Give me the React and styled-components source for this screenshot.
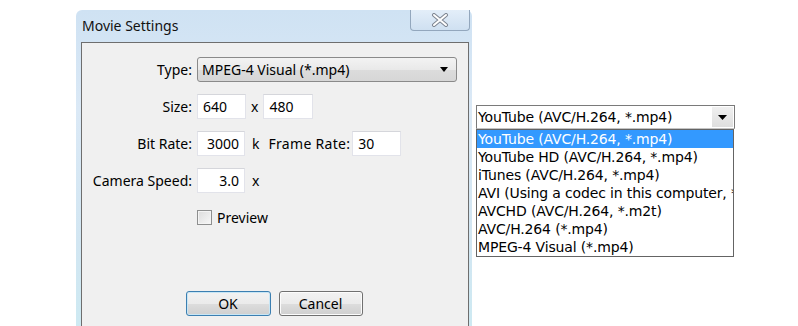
import React, { useState } from "react";
import styled, { createGlobalStyle } from "styled-components";

const GlobalStyle = createGlobalStyle`
  html, body {
    margin: 0;
    padding: 0;
    background: #ffffff;
    overflow: hidden;
  }
`;

const formats = [
  "YouTube (AVC/H.264, *.mp4)",
  "YouTube HD (AVC/H.264, *.mp4)",
  "iTunes (AVC/H.264, *.mp4)",
  "AVI (Using a codec in this computer, *.avi)",
  "AVCHD (AVC/H.264, *.m2t)",
  "AVC/H.264 (*.mp4)",
  "MPEG-4 Visual (*.mp4)",
];

export default function App() {
  const [selected] = useState(0);
  const [preview, setPreview] = useState(false);

  return (
    <>
      <GlobalStyle />
      <Page>
        <Window>
          <TitleBar>
            <Title>Movie Settings</Title>
            <CloseButton>
              <svg width="22" height="14" viewBox="0 0 22 14">
                <path d="M5 2 L17 12 M17 2 L5 12" stroke="#7d8591" strokeWidth="4" strokeLinecap="round" fill="none" />
                <path d="M5 2 L17 12 M17 2 L5 12" stroke="#ffffff" strokeWidth="2" strokeLinecap="round" fill="none" />
              </svg>
            </CloseButton>
          </TitleBar>
          <Client>
            <Form>
              <Label>Type:</Label>
              <Select>
                <span>MPEG-4 Visual (*.mp4)</span>
                <Arrow />
              </Select>

              <Label>Size:</Label>
              <Line>
                <Field $w={49}>640</Field>
                <Unit $l={5} $r={5}>x</Unit>
                <Field $w={50}>480</Field>
              </Line>

              <Label>Bit Rate:</Label>
              <Line>
                <Field $w={48} $right>3000</Field>
                <Unit $l={7} $r={0}>k</Unit>
                <Unit $l={9} $r={2} $wide>Frame Rate:</Unit>
                <Field $w={49}>30</Field>
              </Line>

              <Label>Camera Speed:</Label>
              <Line>
                <Field $w={48} $right>3.0</Field>
                <Unit $l={7} $r={0}>x</Unit>
              </Line>

              <span />
              <Line>
                <Check $on={preview} onClick={() => setPreview(!preview)} />
                <CheckText>Preview</CheckText>
              </Line>
            </Form>
            <Buttons>
              <Button $default>OK</Button>
              <Button>Cancel</Button>
            </Buttons>
          </Client>
        </Window>

        <Combo>
          <ComboBox>
            <ComboText>{formats[selected]}</ComboText>
            <ComboArrow>
              <svg width="9" height="5" viewBox="0 0 9 5">
                <path d="M0 0 L9 0 L4.5 5 Z" fill="#000" />
              </svg>
            </ComboArrow>
          </ComboBox>
          <List>
            {formats.map((f, i) => (
              <Option key={f} $active={i === selected}>
                {f}
              </Option>
            ))}
          </List>
        </Combo>
      </Page>
    </>
  );
}

const Page = styled.div`
  display: flex;
  align-items: flex-start;
  padding: 10px 0 0 76px;
`;

const Window = styled.div`
  width: 396px;
  height: 330px;
  display: flex;
  flex-direction: column;
  background: linear-gradient(180deg, #cfe2f3 0%, #dbe9f6 30%, #d2e6f2 70%, #cdeaf2 100%);
  border-top-left-radius: 6px;
  border-top-right-radius: 6px;
  font-family: "Noto Sans", "Open Sans", sans-serif;
  color: #000;
`;

const TitleBar = styled.div`
  height: 32px;
  display: flex;
  align-items: flex-start;
  justify-content: space-between;
`;

const Title = styled.div`
  font-size: 14px;
  padding: 6px 0 0 6px;
  color: #111;
`;

const CloseButton = styled.div`
  width: 58px;
  height: 20px;
  margin-right: 2px;
  border: 1px solid #93a7bd;
  border-top: none;
  border-radius: 0 0 4px 4px;
  background: linear-gradient(180deg, #e3eef9, #cfe0f1);
  display: flex;
  align-items: center;
  justify-content: center;
`;

const Client = styled.div`
  flex: 1;
  margin: 0 3px 0 5px;
  background: #f0f0f0;
  border: 1px solid #6e6e6e;
  display: flex;
  flex-direction: column;
`;

const Form = styled.div`
  display: grid;
  grid-template-columns: 110px 1fr;
  grid-auto-rows: 25px;
  column-gap: 5px;
  row-gap: 12px;
  align-items: center;
  padding-top: 14px;
  font-size: 14px;
`;

const Label = styled.div`
  text-align: right;
  white-space: nowrap;
`;

const Line = styled.div`
  display: flex;
  align-items: center;
  height: 25px;
`;

const Select = styled.div`
  height: 23px;
  width: 246px;
  box-sizing: content-box;
  border: 1px solid #8a8a8a;
  border-radius: 3px;
  background: linear-gradient(180deg, #f3f3f3 0%, #e9e9e9 50%, #dcdcdc 51%, #d6d6d6 100%);
  display: flex;
  align-items: center;
  justify-content: space-between;
  padding: 0 8px 0 4px;
`;

const Arrow = styled.div`
  width: 0;
  height: 0;
  border-left: 4.5px solid transparent;
  border-right: 4.5px solid transparent;
  border-top: 5px solid #000;
`;

const Field = styled.div`
  width: ${(p) => p.$w}px;
  height: 25px;
  box-sizing: border-box;
  background: #fff;
  border: 1px solid #e2e3ea;
  border-top-color: #d5d6db;
  display: flex;
  align-items: center;
  justify-content: ${(p) => (p.$right ? "flex-end" : "flex-start")};
  padding: 0 5px;
`;

const Unit = styled.span`
  padding: 0 ${(p) => p.$r}px 0 ${(p) => p.$l}px;
  white-space: nowrap;
  letter-spacing: ${(p) => (p.$wide ? "0.3px" : "0")};
`;

const Check = styled.div`
  width: 13px;
  height: 13px;
  border: 1px solid #8e8f8f;
  background: linear-gradient(135deg, #dcdcdc, #f7f7f7);
  box-shadow: inset 0 0 0 1px #f4f4f4;
`;

const CheckText = styled.span`
  margin-left: 5px;
`;

const Buttons = styled.div`
  display: flex;
  justify-content: center;
  gap: 8px;
  margin-top: 61px;
  padding-right: 2px;
`;

const Button = styled.div`
  width: ${(p) => (p.$default ? 83 : 82)}px;
  height: 23px;
  border: 1px solid ${(p) => (p.$default ? "#3c7fb1" : "#707070")};
  border-radius: 3px;
  background: linear-gradient(180deg, #f2f2f2 0%, #ebebeb 50%, #dddddd 51%, #cfcfcf 100%);
  box-shadow: inset 0 0 0 1px ${(p) => (p.$default ? "#c8e6f5" : "#fcfcfc")};
  display: flex;
  align-items: center;
  justify-content: center;
  font-size: 14px;
`;

const Combo = styled.div`
  margin: 95px 0 0 4px;
  width: 259px;
  font-family: "DejaVu Sans", "Liberation Sans", sans-serif;
  font-size: 14px;
  letter-spacing: -0.15px;
`;

const ComboBox = styled.div`
  height: 22px;
  border: 1px solid #7a7a7a;
  border-bottom-color: #c4c4c4;
  display: flex;
  align-items: center;
  justify-content: space-between;
  padding-left: 1px;
  background: #fff;
`;

const ComboText = styled.span`
  white-space: nowrap;
`;

const ComboArrow = styled.div`
  width: 21px;
  height: 20px;
  margin-right: 1px;
  background: linear-gradient(180deg, #f0f0f0, #dedede);
  display: flex;
  align-items: center;
  justify-content: center;
`;

const List = styled.div`
  width: 256px;
  border: 1px solid #646464;
  background: #fff;
  overflow: hidden;
`;

const Option = styled.div`
  height: 18px;
  line-height: 18px;
  padding-left: 1px;
  white-space: nowrap;
  overflow: hidden;
  background: ${(p) => (p.$active ? "#3399ff" : "transparent")};
  color: ${(p) => (p.$active ? "#fff" : "#000")};
`;
